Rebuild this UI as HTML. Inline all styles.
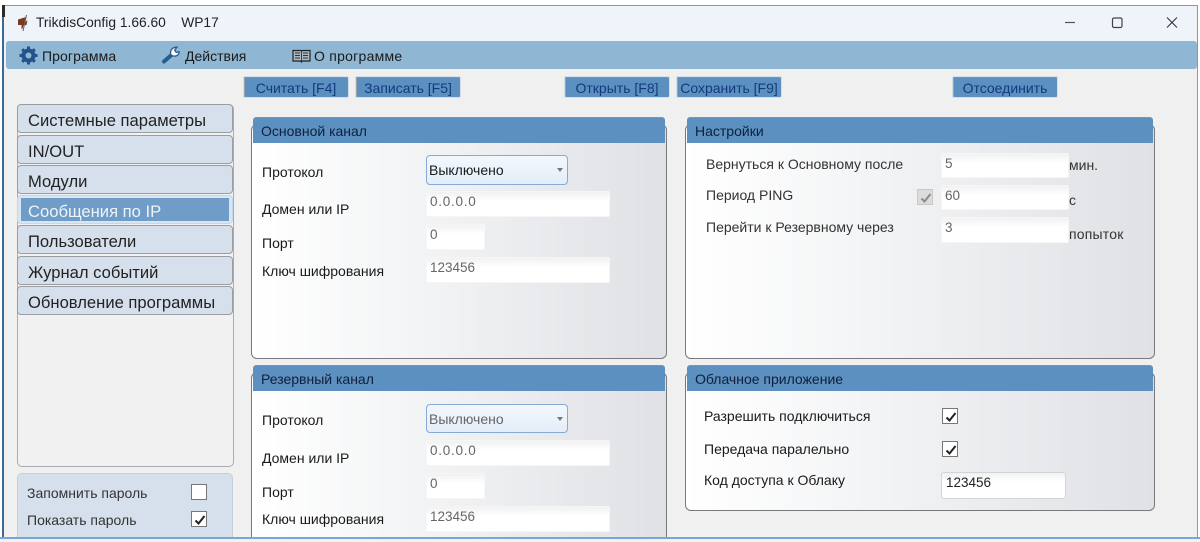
<!DOCTYPE html>
<html lang="ru"><head><meta charset="utf-8"><title>TrikdisConfig</title>
<style>
html,body{margin:0;padding:0;background:#fff}
body{width:1200px;height:542px;position:relative;overflow:hidden;font-family:"Liberation Sans",sans-serif;color:#1a1a1a}
div,span.t{position:absolute;box-sizing:border-box}
#w{left:0;top:0;width:1200px;height:542px;overflow:hidden;filter:blur(.35px)}
.t{white-space:nowrap;line-height:18px;height:18px;font-size:14px;position:absolute}
.btn{background:#5b90c0;border:1px solid #d5dde5;box-shadow:inset 0 1px 0 #8a9299,inset 1px 0 0 #9aa3ab;height:22px;top:76px;color:#143a7c;font-size:14px;line-height:22px;text-align:center;white-space:nowrap;border-radius:2px}
.nav{left:17px;width:216px;height:29px;background:#d6e0ec;border:1.5px solid #9a9ea3;border-radius:4px;font-size:16.6px;line-height:31px;padding-left:10px;color:#222;white-space:nowrap}
.panel{border:1.5px solid #77797c;border-radius:6px;background:linear-gradient(90deg,#fff 0%,#f6f7f8 30%,#dfe1e5 100%)}
.head{background:#5b90c0;height:25px;border-radius:3px 3px 0 0;box-shadow:0 -1px 0 #8a939b;color:#10203a;font-size:14px;line-height:27px;padding-left:8px;white-space:nowrap}
.inp{background:linear-gradient(180deg,#f1f1f1 0,#fff 9px);border:1px solid #f6f6f6;height:26px;border-radius:2px;color:#666;font-size:13.5px;line-height:20px;padding-left:3px;white-space:nowrap}
.ip{letter-spacing:.75px}
.sel{background:linear-gradient(180deg,#f2f7fd,#e4eef9);border:1px solid #84abd6;border-radius:4px;height:30px;width:142px;font-size:14px;line-height:29px;padding-left:2px;color:#1a1a1a}
.sel:after{content:"";position:absolute;right:4px;top:12px;border:3.5px solid transparent;border-top:4px solid #777}
.cb{width:16px;height:16px;background:#fff;border:1px solid #777}
.cb svg{position:absolute;left:1px;top:1px}
</style></head><body><div id="w">
<div style="left:2px;top:5px;width:1196px;height:534px;background:#f0f0f0;border:1px solid #6f9fcc;border-left:2px solid #3a6a9a;border-right:1.5px solid #6f9fcc"></div>
<div style="left:4px;top:6px;width:1192px;height:35px;background:#eef4fa"></div>
<div style="left:2px;top:5px;width:3px;height:12px;background:#2b2b2b"></div>
<div style="left:6px;top:41px;width:1191px;height:28px;background:#8fb6d2;border-radius:3px"></div>

<svg style="position:absolute;left:16px;top:14px" width="14" height="18" viewBox="0 0 14 18"><path d="M2 5.500l8-2.500-.5 5 2-2-1 5-3 .5-1 3-1 .5V11H2z" fill="#7a3a22"/><path d="M10.500 1L7 17" stroke="#666" stroke-width="1"/></svg>
<span class="t" style="left:36px;top:14px;color:#222;font-size:13.8px">TrikdisConfig 1.66.60&nbsp;&nbsp;&nbsp; WP17</span>
<svg style="position:absolute;left:1065px;top:16px" width="120" height="14" viewBox="0 0 120 14"><path d="M0 6.500H10" stroke="#555" stroke-width="1.2"/><rect x="47.500" y="2" width="9.500" height="9.500" rx="1.500" fill="none" stroke="#444" stroke-width="1.2"/><path d="M102 1.500L112 11.500M112 1.500L102 11.500" stroke="#333" stroke-width="1.1" fill="none"/></svg>

<svg style="position:absolute;left:19px;top:46px" width="19" height="19" viewBox="0 0 19 19"><circle cx="9.500" cy="9.500" r="5" fill="none" stroke="#23528c" stroke-width="4"/><path d="M9.500 .5V4M9.500 15V18.500M.5 9.500H4M15 9.500H18.500M3.200 3.200L5.600 5.600M13.400 13.400L15.800 15.800M3.200 15.800L5.600 13.400M13.400 5.600L15.800 3.200" stroke="#23528c" stroke-width="3"/></svg>
<span class="t" style="left:42px;top:47px;letter-spacing:.1px">Программа</span>
<svg style="position:absolute;left:162px;top:45px" width="20" height="20" viewBox="0 0 20 20"><path d="M2 16.500L10 9.500" stroke="#2a5c94" stroke-width="4" stroke-linecap="round"/><path d="M9 10C7.500 6 10 2 15 2.200L12.600 5l1.600 2.400 3-.6C17 10.500 13 12.500 9 10z" fill="#fff" stroke="#2a5c94" stroke-width="1.3"/></svg>
<span class="t" style="left:185px;top:47px">Действия</span>
<svg style="position:absolute;left:292px;top:48px" width="19" height="15" viewBox="0 0 19 15"><path d="M1 2.500h7.500c.6 0 1 .5 1 1 0-.5.4-1 1-1H18V13h-7.500l-1 1-1-1H1z" fill="#aab8c4" stroke="#222" stroke-width="1.2"/><path d="M3 5h5M3 7.500h5M3 10h5M11 5h5M11 7.500h5M11 10h5M9.500 3.500V13" stroke="#333" stroke-width=".9"/></svg>
<span class="t" style="left:314px;top:47px;letter-spacing:.25px">О программе</span>

<div class="btn" style="left:243px;width:106px">Считать [F4]</div>
<div class="btn" style="left:355px;width:106px">Записать [F5]</div>
<div class="btn" style="left:564px;width:106px">Открыть [F8]</div>
<div class="btn" style="left:676px;width:106px">Сохранить [F9]</div>
<div class="btn" style="left:952px;width:106px">Отсоединить</div>

<div style="left:17px;top:104px;width:217px;height:363px;border:1.5px solid #a9adb0;border-radius:5px;background:#f1f1f1"></div>
<div class="nav" style="top:104px">Системные параметры</div>
<div class="nav" style="top:135px">IN/OUT</div>
<div class="nav" style="top:165px">Модули</div>
<div class="nav" style="top:195px;background:#d8e6f3;border:1.5px solid #c3d8eb;padding:0">
  <div style="left:3px;top:2px;right:3px;bottom:2px;background:#6f9dc7;color:#eef3f8;line-height:27px;padding-left:7px">Сообщения по IP</div></div>
<div class="nav" style="top:225px">Пользователи</div>
<div class="nav" style="top:256px">Журнал событий</div>
<div class="nav" style="top:286px">Обновление программы</div>

<div style="left:17px;top:473px;width:216px;height:64px;background:#d5e0ec;border:1px solid #c5ced8;border-bottom:0;border-radius:5px 5px 0 0"></div>
<span class="t" style="left:27px;top:484px;color:#333">Запомнить пароль</span>
<div class="cb" style="left:191px;top:484px"></div>
<span class="t" style="left:27px;top:511px;color:#333">Показать пароль</span>
<div class="cb" style="left:191px;top:511px"><svg width="14" height="14" viewBox="0 0 14 14"><path d="M2.500 7.500L5.500 10.500L11.500 3" fill="none" stroke="#222" stroke-width="2"/></svg></div>

<!-- Основной канал -->
<div class="panel" style="left:251px;top:124px;width:416px;height:235px"></div>
<div class="head" style="left:253px;top:118px;width:412px">Основной канал</div>
<span class="t" style="left:262px;top:163px">Протокол</span>
<div class="sel" style="left:426px;top:155px">Выключено</div>
<span class="t" style="left:262px;top:200px">Домен или IP</span>
<div class="inp ip" style="left:426px;top:191px;width:184px">0.0.0.0</div>
<span class="t" style="left:262px;top:234px">Порт</span>
<div class="inp" style="left:426px;top:224px;width:59px">0</div>
<span class="t" style="left:262px;top:262px">Ключ шифрования</span>
<div class="inp" style="left:426px;top:257px;width:184px">123456</div>

<!-- Резервный канал -->
<div class="panel" style="left:251px;top:372px;width:416px;height:175px"></div>
<div class="head" style="left:253px;top:366px;width:412px">Резервный канал</div>
<span class="t" style="left:262px;top:411px">Протокол</span>
<div class="sel" style="left:426px;top:404px;height:29px;color:#666">Выключено</div>
<span class="t" style="left:262px;top:449px">Домен или IP</span>
<div class="inp ip" style="left:426px;top:440px;width:184px">0.0.0.0</div>
<span class="t" style="left:262px;top:483px">Порт</span>
<div class="inp" style="left:426px;top:473px;width:59px">0</div>
<span class="t" style="left:262px;top:510px">Ключ шифрования</span>
<div class="inp" style="left:426px;top:506px;width:184px">123456</div>

<!-- Настройки -->
<div class="panel" style="left:685px;top:124px;width:470px;height:235px"></div>
<div class="head" style="left:687px;top:118px;width:466px">Настройки</div>
<span class="t" style="left:706px;top:155px;color:#333">Вернуться к Основному после</span>
<div class="inp" style="left:941px;top:153px;width:128px;height:25px">5</div>
<span class="t" style="left:1069px;top:156px;color:#333">мин.</span>
<span class="t" style="left:706px;top:186px;color:#333">Период PING</span>
<div class="cb" style="left:917px;top:189px;background:#dcdcdc;border-color:#c8c8c8"><svg width="14" height="14" viewBox="0 0 14 14"><path d="M2.500 7.500L5.500 10.500L11.500 3" fill="none" stroke="#8a8a8a" stroke-width="2"/></svg></div>
<div class="inp" style="left:941px;top:185px;width:128px;height:25px">60</div>
<span class="t" style="left:1069px;top:191px;color:#333">с</span>
<span class="t" style="left:706px;top:218px;color:#333">Перейти к Резервному через</span>
<div class="inp" style="left:941px;top:217px;width:128px;height:26px">3</div>
<span class="t" style="left:1069px;top:225px;color:#333;letter-spacing:.2px">попыток</span>

<!-- Облачное приложение -->
<div class="panel" style="left:685px;top:372px;width:470px;height:139px"></div>
<div class="head" style="left:687px;top:366px;width:466px">Облачное приложение</div>
<span class="t" style="left:704px;top:407px">Разрешить подключиться</span>
<div class="cb" style="left:942px;top:408px"><svg width="14" height="14" viewBox="0 0 14 14"><path d="M2.500 7.500L5.500 10.500L11.500 3" fill="none" stroke="#222" stroke-width="2"/></svg></div>
<span class="t" style="left:704px;top:440px">Передача паралельно</span>
<div class="cb" style="left:942px;top:441px"><svg width="14" height="14" viewBox="0 0 14 14"><path d="M2.500 7.500L5.500 10.500L11.500 3" fill="none" stroke="#222" stroke-width="2"/></svg></div>
<span class="t" style="left:704px;top:471px">Код доступа к Облаку</span>
<div class="inp" style="left:941px;top:472px;width:125px;height:27px;border:1px solid #d2d4d6;color:#222;line-height:20px;padding-left:4px;border-radius:3px">123456</div>

<!-- нижняя граница окна -->
<div style="left:0;top:537px;width:1200px;height:2.500px;background:#7ba6cf"></div>
<div style="left:0;top:539px;width:1200px;height:3px;background:#eef3f8"></div>
</div></body></html>
